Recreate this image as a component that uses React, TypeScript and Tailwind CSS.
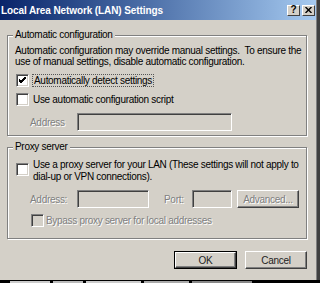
import React from "react";

const font = { fontFamily: '"Liberation Sans", Arial, sans-serif' };

function Check({ checked, disabled }: { checked?: boolean; disabled?: boolean }) {
  return (
    <div
      className={`w-[13px] h-[13px] shrink-0 border border-t-[#808080] border-l-[#808080] border-b-white border-r-white shadow-[inset_1px_1px_0_#404040,inset_-1px_-1px_0_#d4d0c8] flex items-center justify-center ${
        disabled ? "bg-[#d4d0c8]" : "bg-white"
      }`}
    >
      {checked && (
        <svg width="7" height="7" viewBox="0 0 7 7">
          <path d="M0 2 L2 4 L7 -1 M0 3 L2 5 L7 0 M0 4 L2 6 L7 1" stroke="#000" strokeWidth="1" fill="none" />
        </svg>
      )}
    </div>
  );
}

function Field({ w }: { w: string }) {
  return (
    <div
      className={`${w} h-[18px] shrink-0 bg-[#d4d0c8] border border-t-[#808080] border-l-[#808080] border-b-white border-r-white shadow-[inset_1px_1px_0_#404040,inset_-1px_-1px_0_#d4d0c8]`}
    />
  );
}

function Btn({ label, disabled, def, w }: { label: string; disabled?: boolean; def?: boolean; w: string }) {
  return (
    <div className={`${w} h-[18px] shrink-0 ${def ? "border border-black" : ""} flex`}>
      <div
        className={`flex-1 flex items-center justify-center border border-t-white border-l-white border-b-[#404040] border-r-[#404040] shadow-[inset_-1px_-1px_0_#808080] ${
          disabled ? "text-[#808080] [text-shadow:1px_1px_0_#fff]" : "text-[#222]"
        }`}
      >
        {label}
      </div>
    </div>
  );
}

const dis = "text-[#808080] [text-shadow:1px_1px_0_#fff]";

function Group({ title, children, h }: { title: string; children: React.ReactNode; h: string }) {
  return (
    <div className={`relative ${h} border border-[#808080] shadow-[inset_1px_1px_0_#fff,1px_1px_0_#fff]`}>
      <span className="absolute -top-[7px] left-[5px] px-[2px] bg-[#d4d0c8] leading-[12px] text-black">
        {title}
      </span>
      {children}
    </div>
  );
}

export default function App() {
  return (
    <div
      className="w-[320px] h-[283px] bg-black overflow-hidden text-[10px] tracking-[-0.3px] text-black"
      style={font}
    >
      <div className="h-[280px] bg-[#d4d0c8] border-r-[3px] border-r-[#404040] shadow-[inset_-1px_0_0_#808080] flex flex-col">
        {/* title bar */}
        <div className="h-[20px] mr-[1px] bg-gradient-to-r from-[#0a246a] to-[#a6caf0] flex items-center">
          <span className="pl-[1px] text-white font-bold text-[10px] tracking-[-0.1px]">
            Local Area Network (LAN) Settings
          </span>
          <div className="ml-auto flex gap-[2px] pr-[1px]">
            <div className="w-[13px] h-[11px] bg-[#d4d0c8] border border-t-white border-l-white border-b-[#404040] border-r-[#404040] flex items-center justify-center text-[10px] font-bold leading-none tracking-normal">
              ?
            </div>
            <div className="w-[13px] h-[11px] bg-[#d4d0c8] border border-t-white border-l-white border-b-[#404040] border-r-[#404040] flex items-center justify-center">
              <svg width="7" height="6" viewBox="0 0 7 6">
                <path d="M0.5 0 L6.5 6 M6.5 0 L0.5 6" stroke="#000" strokeWidth="1.4" />
              </svg>
            </div>
          </div>
        </div>

        <div className="pl-[7px] pr-[10px] pt-[15px]">
          <Group title="Automatic configuration" h="h-[101px]">
            <div className="pl-[7px] pt-[9px] leading-[11px]">
              Automatic configuration may override manual settings.&nbsp; To ensure the
              <br />
              use of manual settings, disable automatic configuration.
            </div>
            <div className="flex items-center pl-[8px] mt-[7px] gap-[3px]">
              <Check checked />
              <span className="border border-dotted border-[#555] px-[1px] leading-[11px]">
                Automatically detect settings
              </span>
            </div>
            <div className="flex items-center pl-[8px] mt-[5px] gap-[4px]">
              <Check />
              <span>Use automatic configuration script</span>
            </div>
            <div className="flex items-center pl-[22px] mt-[6px]">
              <span className={`w-[47px] ${dis}`}>Address</span>
              <Field w="w-[155px]" />
            </div>
          </Group>

          <div className="mt-[11px]">
            <Group title="Proxy server" h="h-[92px]">
              <div className="flex items-start pl-[8px] pt-[14px] gap-[4px]">
                <div className="pt-[1px]">
                  <Check />
                </div>
                <div className="leading-[12px] -mt-[3px]">
                  Use a proxy server for your LAN (These settings will not apply to
                  <br />
                  dial-up or VPN connections).
                </div>
              </div>
              <div className="flex items-center pl-[22px] mt-[7px]">
                <span className={`w-[47px] ${dis}`}>Address:</span>
                <Field w="w-[72px]" />
                <span className={`ml-[15px] w-[28px] ${dis}`}>Port:</span>
                <Field w="w-[40px]" />
                <div className="ml-[5px]">
                  <Btn label="Advanced..." disabled w="w-[62px]" />
                </div>
              </div>
              <div className="flex items-center pl-[23px] mt-[5px] gap-[2px]">
                <Check disabled />
                <span className={dis}>Bypass proxy server for local addresses</span>
              </div>
            </Group>
          </div>

          <div className="flex justify-end gap-[8px] mt-[12px]">
            <Btn label="OK" def w="w-[63px]" />
            <Btn label="Cancel" w="w-[62px]" />
          </div>
        </div>
      </div>
      <div className="h-[3px] flex gap-[3px] px-[10px] pt-[1px]">
        <div className="w-[40px] h-[2px] bg-[#ccc]" />
        <div className="w-[30px] h-[2px] bg-[#bbb]" />
        <div className="w-[55px] h-[2px] bg-[#ccc]" />
        <div className="w-[45px] h-[2px] bg-[#aaa]" />
        <div className="w-[60px] h-[2px] bg-[#888]" />
      </div>
    </div>
  );
}
